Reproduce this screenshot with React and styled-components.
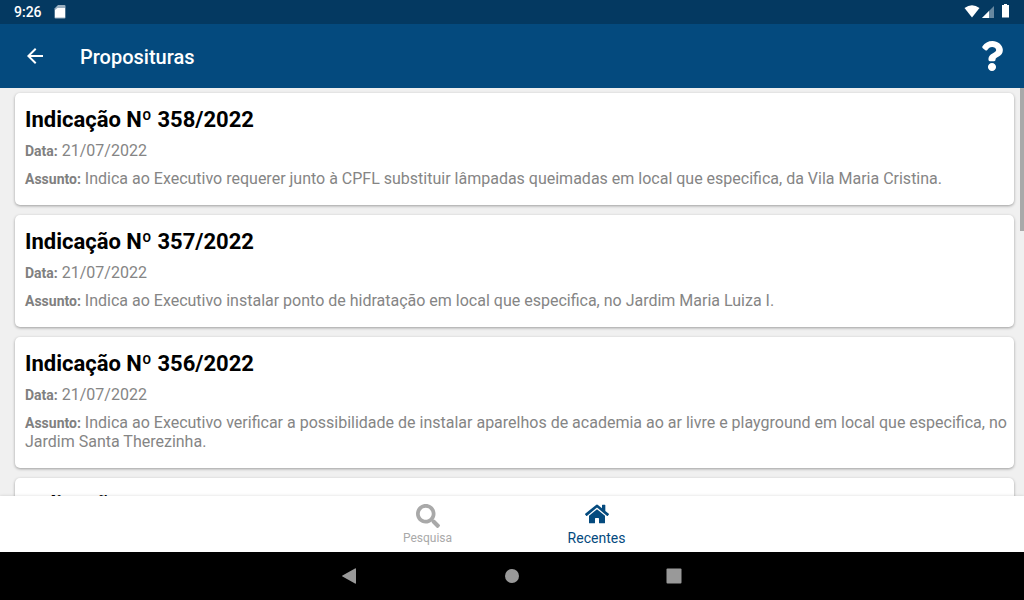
import styled, { createGlobalStyle } from 'styled-components';
import { MdArrowBack } from 'react-icons/md';
import { FaHome, FaQuestion, FaSearch } from 'react-icons/fa';

const GlobalStyle = createGlobalStyle`
  * {
    box-sizing: border-box;
  }

  body {
    margin: 0;
    font-family: Roboto, "Noto Sans", sans-serif;
  }

  button {
    padding: 0;
    border: none;
    background: none;
    font-family: inherit;
    cursor: pointer;
  }
`;

const Screen = styled.div`
  display: flex;
  flex-direction: column;
  height: 100vh;
  background-color: #f0f0f0;
`;

const StatusBar = styled.div`
  display: flex;
  align-items: center;
  flex: none;
  height: 24px;
  padding: 0 14px;
  background-color: #043961;
  color: white;
`;

const Clock = styled.time`
  margin-right: 12px;
  font-size: 14px;
  font-weight: 500;
`;

const StatusIcons = styled.svg`
  margin-left: auto;
`;

const Header = styled.header`
  display: flex;
  align-items: center;
  flex: none;
  height: 64px;
  padding: 0 17px 0 23px;
  background-color: #044a7e;
  color: white;
`;

const HeaderButton = styled.button`
  display: flex;
  color: white;
`;

const HeaderTitle = styled.h1`
  flex: 1;
  margin: 2px 0 0 33px;
  font-size: 20px;
  font-weight: 500;
`;

const Content = styled.div`
  position: relative;
  flex: 1;
  min-height: 0;
`;

const List = styled.main`
  display: flex;
  flex-direction: column;
  gap: 10px;
  height: 100%;
  padding: 5px 10px 5px 15px;
  overflow-y: auto;
  scrollbar-width: none;
`;

const ScrollThumb = styled.div`
  position: absolute;
  top: 0;
  right: 0;
  width: 4px;
  height: 35%;
  background-color: #a9a9a9;
`;

const Card = styled.article`
  display: flex;
  flex-direction: column;
  flex: none;
  gap: 9px;
  padding: 14px 4px 17px 10px;
  border-radius: 5px;
  background-color: white;
  box-shadow: 0 1px 3px rgba(0, 0, 0, 0.35);
`;

const CardTitle = styled.h2`
  margin: 0;
  font-size: 22px;
  line-height: 25px;
  font-weight: 700;
  color: black;
`;

const CardText = styled.p`
  margin: 0;
  font-size: 16px;
  line-height: 19px;
  color: #858585;
`;

const CardLabel = styled.strong`
  font-size: 14px;
  line-height: 1;
  font-weight: 700;
  color: #808080;
`;

const TabBar = styled.nav`
  display: flex;
  justify-content: center;
  position: relative;
  flex: none;
  height: 56px;
  background-color: white;
  box-shadow: 0 0 3px rgba(0, 0, 0, 0.15);
`;

const Tab = styled.button`
  display: flex;
  flex-direction: column;
  align-items: center;
  justify-content: space-between;
  width: 169px;
  padding: ${(props) => (props.$active ? '6px' : '8px')} 0 6px;
  font-size: ${(props) => (props.$active ? '14px' : '12px')};
  line-height: 16px;
  color: ${(props) => (props.$active ? '#044a7e' : '#a9a9a9')};
`;

const SystemBar = styled.div`
  display: flex;
  justify-content: center;
  flex: none;
  height: 48px;
  background-color: black;
`;

const SystemButton = styled.button`
  display: flex;
  align-items: center;
  justify-content: center;
  width: 162px;
  color: #999999;
`;

const items = [
  {
    number: '358/2022',
    date: '21/07/2022',
    subject: 'Indica ao Executivo requerer junto à CPFL substituir lâmpadas queimadas em local que especifica, da Vila Maria Cristina.',
  },
  {
    number: '357/2022',
    date: '21/07/2022',
    subject: 'Indica ao Executivo instalar ponto de hidratação em local que especifica, no Jardim Maria Luiza I.',
  },
  {
    number: '356/2022',
    date: '21/07/2022',
    subject: 'Indica ao Executivo verificar a possibilidade de instalar aparelhos de academia ao ar livre e playground em local que especifica, no Jardim Santa Therezinha.',
  },
  {
    number: '355/2022',
  },
];

const App = () => {
  return (
    <Screen>
      <GlobalStyle />
      <StatusBar>
        <Clock>9:26</Clock>
        <svg width="12" height="14" viewBox="0 0 12 14" fill="currentColor">
          <path d="M4 0h6.500q1 0 1 1v11.500q0 1-1 1h-9q-1 0-1-1V3.500z" opacity="0.6" />
          <path d="M1 5L3.500 3H11v9.500H1z" />
        </svg>
        <StatusIcons width="46" height="16" viewBox="0 0 46 16" fill="currentColor">
          <path d="M0.500 4Q8 -1.500 15.500 4L8 13.500z" />
          <path d="M30 2v12H18z" opacity="0.4" />
          <path d="M25 7v7h-7z" />
          <path d="M40 0h3v1h2v12.500h-7V1h2z" />
        </StatusIcons>
      </StatusBar>
      <Header>
        <HeaderButton type="button" aria-label="Voltar">
          <MdArrowBack size={24} />
        </HeaderButton>
        <HeaderTitle>Proposituras</HeaderTitle>
        <HeaderButton type="button" aria-label="Ajuda">
          <FaQuestion size={30} />
        </HeaderButton>
      </Header>
      <Content>
        <List>
          {items.map((item) => (
            <Card key={item.number}>
              <CardTitle>Indicação Nº {item.number}</CardTitle>
              {item.date && (
                <CardText><CardLabel>Data:</CardLabel> {item.date}</CardText>
              )}
              {item.subject && (
                <CardText><CardLabel>Assunto:</CardLabel> {item.subject}</CardText>
              )}
            </Card>
          ))}
        </List>
        <ScrollThumb />
      </Content>
      <TabBar>
        <Tab type="button">
          <FaSearch size={24} />
          Pesquisa
        </Tab>
        <Tab type="button" $active>
          <FaHome size={24} />
          Recentes
        </Tab>
      </TabBar>
      <SystemBar>
        <SystemButton type="button" aria-label="Voltar">
          <svg width="16" height="16" viewBox="1 0 16 16" fill="currentColor">
            <path d="M14 0.500q1-0.500 1 0.500v14q0 1-1 0.500L1.500 8.500q-1-0.500 0-1z" />
          </svg>
        </SystemButton>
        <SystemButton type="button" aria-label="Início">
          <svg width="14" height="14" viewBox="0 0 14 14" fill="currentColor">
            <circle cx="7" cy="7" r="7" />
          </svg>
        </SystemButton>
        <SystemButton type="button" aria-label="Aplicativos recentes">
          <svg width="16" height="16" viewBox="0 0 16 16" fill="currentColor">
            <rect x="0.500" y="0.500" width="15" height="15" rx="1" />
          </svg>
        </SystemButton>
      </SystemBar>
    </Screen>
  )
}

export default App
